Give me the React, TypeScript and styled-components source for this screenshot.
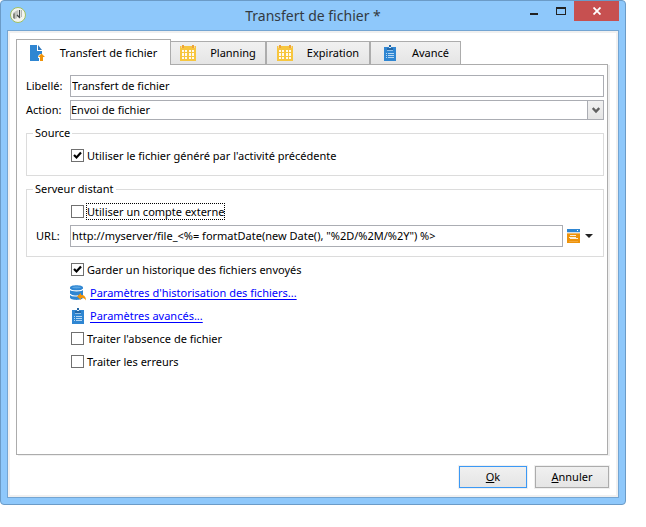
import React, { useState } from "react";
import styled, { createGlobalStyle } from "styled-components";

const GlobalStyle = createGlobalStyle`
  *, *::before, *::after { box-sizing: border-box; }
  body {
    margin: 0;
    background: #fff;
    color: #000;
    font: 11px/16px "Noto Sans", "Open Sans", sans-serif;
  }
  button, input, select { font: inherit; color: inherit; margin: 0; }
`;

const Page = styled.div`
  display: flex;
  min-height: 100vh;
  padding: 0 20px 22px 0;
`;

const Window = styled.section`
  flex: 1;
  min-width: 0;
  display: flex;
  flex-direction: column;
  padding: 0 6px;
  padding-bottom: 6px;
  border: 1px solid #6b9bc7;
  border-radius: 4px;
  background: #8ec8fb;
`;

const TitleBar = styled.header`
  display: grid;
  grid-template-columns: 89px 1fr 89px;
  height: 29px;
`;

const AppLogo = styled.svg`
  width: 18px;
  height: 18px;
  margin: 5px 0 0 2px;
`;

const Title = styled.h1`
  margin: 0;
  font-size: 14px;
  line-height: 29px;
  font-weight: 400;
  text-align: center;
  color: #333a42;
  white-space: nowrap;
`;

const WindowButtons = styled.div`
  display: flex;
  justify-content: flex-end;
  align-items: flex-start;
`;

const WindowButton = styled.button<{ $close?: boolean }>`
  display: flex;
  align-items: center;
  justify-content: center;
  flex: none;
  width: ${(p) => (p.$close ? 45 : 27)}px;
  height: 20px;
  padding: 0;
  border: 0;
  background: ${(p) => (p.$close ? "#c75050" : "transparent")};
`;

const Body = styled.div`
  flex: 1;
  display: flex;
  flex-direction: column;
  padding: 6px 8px 7px 6px;
  border: 1px solid #74a5d2;
  background: #fff;
  box-shadow: inset 0 0 0 2px #f0f0f0;
`;

const Inner = styled.div`
  flex: 1;
  display: flex;
  flex-direction: column;
  padding: 2px;
`;

const Tabs = styled.div`
  display: flex;
  align-items: flex-end;
  height: 25px;
`;

const Tab = styled.button<{ $active?: boolean; $width: number }>`
  display: flex;
  align-items: center;
  justify-content: center;
  gap: 14px;
  width: ${(p) => p.$width}px;
  height: ${(p) => (p.$active ? 26 : 23)}px;
  margin: ${(p) => (p.$active ? "0 -1px -1px 0" : "0")};
  padding: 0;
  border: 1px solid #acacac;
  border-bottom: 0;
  background: ${(p) => (p.$active ? "#fff" : "linear-gradient(#f1f1f1, #e5e5e5)")};
  position: relative;
  z-index: ${(p) => (p.$active ? 1 : 0)};
  white-space: nowrap;
`;

const Panel = styled.form`
  flex: 1;
  padding: 10px 3px 10px 9px;
  border: 1px solid #acacac;
  box-shadow: 2px 1px 0 #f0f0f0;
`;

const Field = styled.div`
  display: grid;
  grid-template-columns: 44px 1fr;
  align-items: center;
  margin-bottom: 3px;
`;

const UrlField = styled.div`
  display: grid;
  grid-template-columns: 34px 1fr 40px;
  align-items: center;
  padding-left: 9px;
  margin-top: 5px;
`;

const TextBox = styled.input`
  width: 100%;
  min-width: 0;
  height: 22px;
  padding: 0 1px 1px;
  border: 1px solid #abadb3;
  border-radius: 0;
  background: #fff;
  outline: 0;
`;

const SelectWrap = styled.div`
  position: relative;
  height: 20px;
`;

const Select = styled.select`
  appearance: none;
  display: block;
  width: 100%;
  height: 20px;
  padding: 0 18px 0 0;
  border: 1px solid #abadb3;
  border-radius: 0;
  background: #fff;
  outline: 0;
`;

const SelectArrow = styled.span`
  position: absolute;
  top: 0;
  right: 0;
  bottom: 0;
  width: 17px;
  display: flex;
  align-items: center;
  justify-content: center;
  border: 1px solid #abadb3;
  background: linear-gradient(#f1f1f1, #e5e5e5);
  pointer-events: none;
`;

const Group = styled.fieldset<{ $bottom: number }>`
  min-width: 0;
  margin: 5px 0 0;
  padding: 6px 0 ${(p) => p.$bottom}px;
  border: 1px solid #dcdcdc;
`;

const Legend = styled.legend`
  height: 16px;
  margin-left: 6px;
  padding: 0 2px;
`;

const CheckLabel = styled.label<{ $inset: number }>`
  display: flex;
  align-items: center;
  gap: 2px;
  height: 17px;
  padding-left: ${(p) => p.$inset}px;
`;

const CheckText = styled.span<{ $focused?: boolean }>`
  padding: 0 1px;
  height: 17px;
  line-height: 18px;
  white-space: nowrap;
  outline: ${(p) => (p.$focused ? "1px dotted #000" : "0")};
  outline-offset: -1px;
`;

const CheckMark = styled.span`
  display: grid;
  width: 13px;
  height: 13px;
  flex: none;

  > * { grid-area: 1 / 1; }
  input {
    appearance: none;
    width: 13px;
    height: 13px;
    border: 1px solid #707070;
    background: #fff;
    outline: 0;
  }
  svg { z-index: 1; pointer-events: none; visibility: hidden; }
  input:checked + svg { visibility: visible; }
`;

const Options = styled.div`
  display: grid;
  grid-auto-rows: 23px;
  align-items: center;
  margin-top: 1px;
`;

const LinkRow = styled.div`
  display: flex;
  align-items: center;
  gap: 4px;
  padding-left: 44px;
`;

const Link = styled.a`
  color: #00f;
  text-underline-offset: 2px;
`;

const MenuButton = styled.button`
  display: flex;
  align-items: center;
  gap: 5px;
  height: 20px;
  padding: 0 0 0 4px;
  border: 0;
  background: none;
`;

const Footer = styled.footer`
  display: flex;
  justify-content: flex-end;
  gap: 8px;
  padding: 11px 0 0;
  margin-right: -1px;
`;

const Button = styled.button<{ $primary?: boolean }>`
  width: ${(p) => (p.$primary ? 68 : 74)}px;
  height: 22px;
  padding: 0 0 1px;
  border: 1px solid ${(p) => (p.$primary ? "#3c99f5" : "#acacac")};
  background: linear-gradient(#f0f0f0, #e5e5e5);
  box-shadow: 0 0 0 1px #f0f0f0;
`;

const FileIcon = () => (
  <svg width="16" height="16" viewBox="0 0 16 16" aria-hidden="true">
    <path d="M0 0h7v6h5v3h-2l-2 2v2h1v3H0z" fill="#2f86d2" />
    <path d="M8 0l4 5H8z" fill="#2f78bd" />
    <path d="M11.500 8.500l3.500 3.500h-2v4h-3v-4H8z" fill="#f0940a" />
  </svg>
);

const CalendarIcon = () => (
  <svg width="16" height="16" viewBox="0 0 16 16" aria-hidden="true">
    <path d="M0 1h16v15H0z" fill="#f7c63f" />
    <path d="M1 1h3v2H1zM12 1h3v2h-3z" fill="#fbd98a" />
    <path d="M2 0h2v3H2zM12 0h2v3h-2z" fill="#eda23c" />
    <path
      d="M2 5h2v2H2zM5 5h2v2H5zM9 5h2v2H9zM12 5h2v2h-2zM2 8h2v3H2zM5 8h2v3H5zM9 8h2v3H9zM12 8h2v3h-2zM2 12h2v2H2zM5 12h2v2H5zM9 12h2v2H9zM12 12h2v2h-2z"
      fill="#fffaf0"
    />
  </svg>
);

const ClipboardIcon = () => (
  <svg width="16" height="16" viewBox="0 0 16 16" aria-hidden="true">
    <path d="M2 2h12v14H2z" fill="#2f86d2" />
    <path d="M5 5h6v1H5z" fill="#8fc0ea" />
    <path d="M5 5V3h2V0h2v3h2v2z" fill="#2467a5" />
    <path d="M7 2h2v1H7z" fill="#d8eafa" />
    <path d="M4 8h1v1H4zM6 8h6v1H6zM4 10h1v1H4zM6 10h6v1H6zM4 12h1v1H4zM6 12h6v1H6z" fill="#b5d7f3" />
  </svg>
);

const DatabaseIcon = () => (
  <svg width="16" height="16" viewBox="0 0 16 16" aria-hidden="true">
    <path d="M0 2.500C0-.5 13-.5 13 2.500V12.500C13 15.700 0 15.700 0 12.500z" fill="#2f86d2" />
    <path d="M0 4c1 2.500 12 2.500 13 0M0 9c1 2 5 2.200 8 1.800" fill="none" stroke="#fff" strokeWidth="1.200" />
    <path d="M2 2.500c2-1.300 7-1.300 9 0c-2 1.200-7 1.200-9 0z" fill="#5ba5e2" />
    <path d="M7 11.500L11 8v2c3.500 0 5 2 5 5.500c-1-2.200-2.500-2.500-5-2.500v2z" fill="#f0940a" />
  </svg>
);

const FormIcon = () => (
  <svg width="13" height="14" viewBox="0 0 13 14" aria-hidden="true">
    <path d="M0 0h13v3H0z" fill="#2f86d2" />
    <path d="M10 1h1v1h-1z" fill="#fff" />
    <path d="M0 3h13v1H0z" fill="#cfe0ee" />
    <path d="M0 4h13v1H0z" fill="#f3b866" />
    <path d="M0 5h13v9H0z" fill="#ee930a" />
    <path d="M3 6h6v1H3zM2 8h7v1H2zM3 9h8v1H3z" fill="#fdf0dc" />
    <path d="M2 12h9v1H2z" fill="#f2a73a" />
  </svg>
);

const Logo = () => (
  <AppLogo viewBox="0 0 18 18" aria-hidden="true">
    <circle cx="9" cy="9" r="7.500" fill="#f3f4ef" stroke="#a0c060" />
    <path d="M4 7l3-2 2-1v6l-2 3-3-1z" fill="#c2c4c0" />
    <path d="M4 8l2-1v6l-2-1z" fill="#85887f" />
    <path d="M10.500 4v7M8 9l3 3" fill="none" stroke="#45494a" strokeWidth="1.200" />
    <path d="M12 4h1v7h-1z" fill="#b4b8b4" />
  </AppLogo>
);

type CheckProps = { label: string; inset: number; initial?: boolean; focused?: boolean };

const Check = ({ label, inset, initial = false, focused }: CheckProps) => {
  const [checked, setChecked] = useState(initial);
  return (
    <CheckLabel $inset={inset}>
      <CheckMark>
        <input type="checkbox" checked={checked} onChange={(e) => setChecked(e.target.checked)} />
        <svg width="13" height="13" viewBox="0 0 13 13" aria-hidden="true">
          <path d="M3 6L5.500 8.500L10 3.500" fill="none" stroke="#000" strokeWidth="2.200" />
        </svg>
      </CheckMark>
      <CheckText $focused={focused}>{label}</CheckText>
    </CheckLabel>
  );
};

const tabs = [
  { label: "Transfert de fichier", width: 155, Icon: FileIcon },
  { label: "Planning", width: 96, Icon: CalendarIcon },
  { label: "Expiration", width: 104, Icon: CalendarIcon },
  { label: "Avancé", width: 91, Icon: ClipboardIcon },
];

export default function App() {
  return (
    <>
      <GlobalStyle />
      <Page>
        <Window>
          <TitleBar>
            <Logo />
            <Title>Transfert de fichier *</Title>
            <WindowButtons>
              <WindowButton aria-label="Réduire">
                <svg width="8" height="20" viewBox="0 0 8 20"><path d="M0 12h8v2H0z" fill="#222" /></svg>
              </WindowButton>
              <WindowButton aria-label="Agrandir">
                <svg width="10" height="20" viewBox="0 0 10 20">
                  <path d="M0 6h10v8H0zM1 8v5h8V8z" fill="#222" fillRule="evenodd" />
                </svg>
              </WindowButton>
              <WindowButton $close aria-label="Fermer">
                <svg width="8" height="8" viewBox="0 0 8 8">
                  <path d="M.5 .5l7 7M7.500 .5l-7 7" stroke="#fff" strokeWidth="1.800" />
                </svg>
              </WindowButton>
            </WindowButtons>
          </TitleBar>
          <Body>
            <Inner>
              <Tabs role="tablist">
                {tabs.map(({ label, width, Icon }, i) => (
                  <Tab key={label} type="button" role="tab" aria-selected={i === 0} $active={i === 0} $width={width}>
                    <Icon />
                    {label}
                  </Tab>
                ))}
              </Tabs>
              <Panel onSubmit={(e) => e.preventDefault()}>
                <Field>
                  <label htmlFor="libelle">Libellé:</label>
                  <TextBox id="libelle" defaultValue="Transfert de fichier" />
                </Field>
                <Field>
                  <label htmlFor="action">Action:</label>
                  <SelectWrap>
                    <Select id="action">
                      <option>Envoi de fichier</option>
                    </Select>
                    <SelectArrow>
                      <svg width="8" height="7" viewBox="0 0 8 7" aria-hidden="true">
                        <path d="M.7 1L4 4.500L7.300 1" fill="none" stroke="#606060" strokeWidth="2.400" />
                      </svg>
                    </SelectArrow>
                  </SelectWrap>
                </Field>
                <Group $bottom={11}>
                  <Legend>Source</Legend>
                  <Check inset={44} initial label="Utiliser le fichier généré par l'activité précédente" />
                </Group>
                <Group $bottom={9}>
                  <Legend>Serveur distant</Legend>
                  <Check inset={44} focused label="Utiliser un compte externe" />
                  <UrlField>
                    <label htmlFor="url">URL:</label>
                    <TextBox
                      id="url"
                      defaultValue={'http://myserver/file_<%= formatDate(new Date(), "%2D/%2M/%2Y") %>'}
                    />
                    <MenuButton type="button" aria-label="Insérer">
                      <FormIcon />
                      <svg width="8" height="4" viewBox="0 0 8 4" aria-hidden="true">
                        <path d="M0 0h8L4 4z" fill="#222" />
                      </svg>
                    </MenuButton>
                  </UrlField>
                </Group>
                <Options>
                  <Check inset={45} initial label="Garder un historique des fichiers envoyés" />
                  <LinkRow>
                    <DatabaseIcon />
                    <Link href="#historisation">Paramètres d'historisation des fichiers...</Link>
                  </LinkRow>
                  <LinkRow>
                    <ClipboardIcon />
                    <Link href="#avances">Paramètres avancés...</Link>
                  </LinkRow>
                  <Check inset={45} label="Traiter l'absence de fichier" />
                  <Check inset={45} label="Traiter les erreurs" />
                </Options>
              </Panel>
              <Footer>
                <Button $primary type="button"><u>O</u>k</Button>
                <Button type="button"><u>A</u>nnuler</Button>
              </Footer>
            </Inner>
          </Body>
        </Window>
      </Page>
    </>
  );
}
